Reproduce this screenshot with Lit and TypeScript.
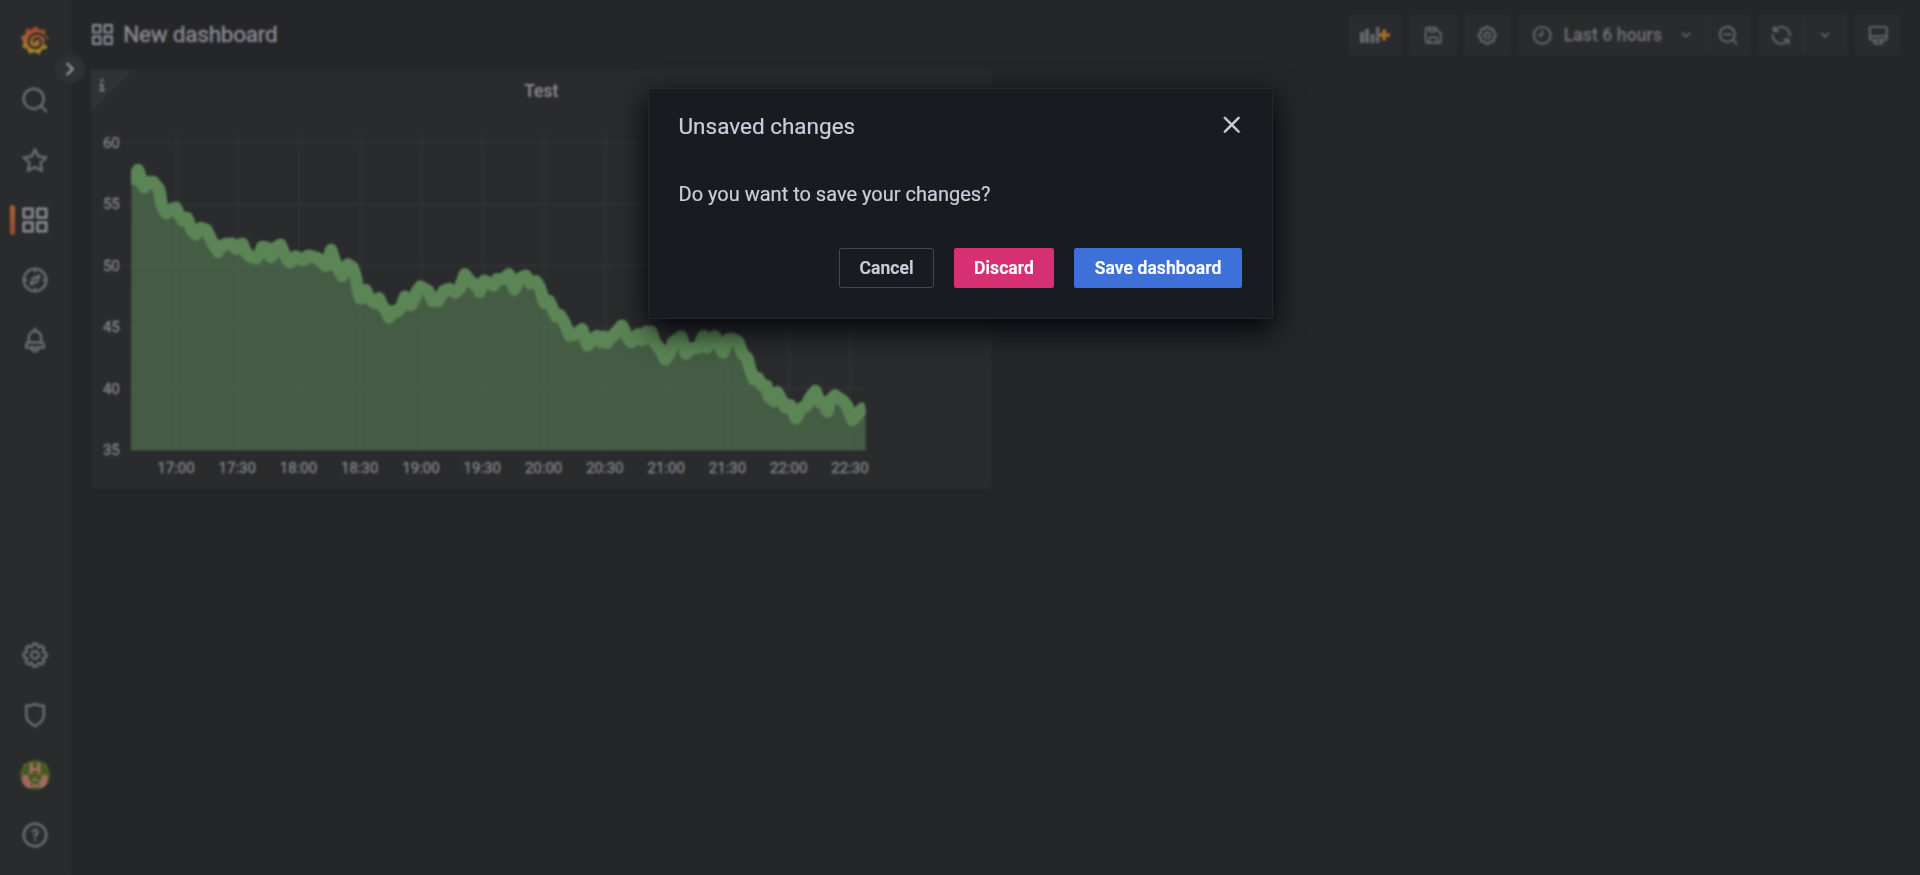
import { LitElement, html, css, svg } from "lit";
import { customElement } from "lit/decorators.js";

const ICONS: Record<string, string> = {
  search: "M21.71,20.29,18,16.61A9,9,0,1,0,16.61,18l3.68,3.68a1,1,0,0,0,1.42,0A1,1,0,0,0,21.71,20.29ZM11,18a7,7,0,1,1,7-7A7,7,0,0,1,11,18Z",
  star: "M22,9.67A1,1,0,0,0,21.14,9l-5.69-.83L12.9,3a1,1,0,0,0-1.8,0L8.55,8.16,2.86,9a1,1,0,0,0-.81.68,1,1,0,0,0,.25,1l4.13,4-1,5.68A1,1,0,0,0,6.9,21.44L12,18.77l5.1,2.67a.93.93,0,0,0,.46.12,1,1,0,0,0,.59-.19,1,1,0,0,0,.4-1l-1-5.68,4.13-4A1,1,0,0,0,22,9.67Zm-6.15,4a1,1,0,0,0-.29.88l.72,4.2-3.76-2a1.06,1.06,0,0,0-.94,0l-3.76,2,.72-4.2a1,1,0,0,0-.29-.88l-3-3,4.21-.61a1,1,0,0,0,.76-.55L12,5.7l1.88,3.82a1,1,0,0,0,.76.55l4.21.61Z",
  apps: "M10,13H3a1,1,0,0,0-1,1v7a1,1,0,0,0,1,1h7a1,1,0,0,0,1-1V14A1,1,0,0,0,10,13ZM9,20H4V15H9ZM21,2H14a1,1,0,0,0-1,1v7a1,1,0,0,0,1,1h7a1,1,0,0,0,1-1V3A1,1,0,0,0,21,2ZM20,9H15V4h5Zm1,4H14a1,1,0,0,0-1,1v7a1,1,0,0,0,1,1h7a1,1,0,0,0,1-1V14A1,1,0,0,0,21,13Zm-1,7H15V15h5ZM10,2H3A1,1,0,0,0,2,3v7a1,1,0,0,0,1,1h7a1,1,0,0,0,1-1V3A1,1,0,0,0,10,2ZM9,9H4V4H9Z",
  compass: "M12,2A10,10,0,1,0,22,12,10,10,0,0,0,12,2Zm1,17.93V19a1,1,0,0,0-2,0v.93A8,8,0,0,1,4.07,13H5a1,1,0,0,0,0-2H4.07A8,8,0,0,1,11,4.07V5a1,1,0,0,0,2,0V4.07A8,8,0,0,1,19.93,11H19a1,1,0,0,0,0,2h.93A8,8,0,0,1,13,19.93ZM15.14,7.55l-5,2.12a1,1,0,0,0-.52.52l-2.12,5a1,1,0,0,0,.21,1.1,1,1,0,0,0,.7.29.93.93,0,0,0,.4-.09l5-2.12a1,1,0,0,0,.52-.52l2.12-5a1,1,0,0,0-1.31-1.3Zm-2.49,5.1-2.28,1,1-2.28,2.28-1Z",
  bell: "M18,13.18V10a6,6,0,0,0-5-5.91V3a1,1,0,0,0-2,0V4.09A6,6,0,0,0,6,10v3.18A3,3,0,0,0,4,16v2a1,1,0,0,0,1,1H8.14a4,4,0,0,0,7.72,0H19a1,1,0,0,0,1-1V16A3,3,0,0,0,18,13.18ZM8,10a4,4,0,0,1,8,0v3H8Zm4,10a2,2,0,0,1-1.72-1h3.44A2,2,0,0,1,12,20Zm6-3H6V16a1,1,0,0,1,1-1H17a1,1,0,0,1,1,1Z",
  cog: "M21.32,9.55l-1.89-.63.89-1.78A1,1,0,0,0,20.13,6L18,3.87a1,1,0,0,0-1.15-.19l-1.78.89-.63-1.89A1,1,0,0,0,13.5,2h-3a1,1,0,0,0-.95.68L8.92,4.57,7.14,3.68A1,1,0,0,0,6,3.87L3.87,6a1,1,0,0,0-.19,1.15l.89,1.78-1.89.63A1,1,0,0,0,2,10.5v3a1,1,0,0,0,.68.95l1.89.63-.89,1.78A1,1,0,0,0,3.87,18L6,20.13a1,1,0,0,0,1.15.19l1.78-.89.63,1.89a1,1,0,0,0,.95.68h3a1,1,0,0,0,.95-.68l.63-1.89,1.78.89A1,1,0,0,0,18,20.13L20.13,18a1,1,0,0,0,.19-1.15l-.89-1.78,1.89-.63A1,1,0,0,0,22,13.5v-3A1,1,0,0,0,21.32,9.55ZM20,12.78l-1.2.4A2,2,0,0,0,17.64,16l.57,1.14-1.1,1.1L16,17.64a2,2,0,0,0-2.79,1.16l-.4,1.2H11.22l-.4-1.2A2,2,0,0,0,8,17.64l-1.14.57-1.1-1.1L6.36,16A2,2,0,0,0,5.2,13.18L4,12.78V11.22l1.2-.4A2,2,0,0,0,6.36,8L5.79,6.89l1.1-1.1L8,6.36A2,2,0,0,0,10.82,5.2l.4-1.2h1.56l.4,1.2A2,2,0,0,0,16,6.36l1.14-.57,1.1,1.1L17.64,8a2,2,0,0,0,1.16,2.79l1.2.4ZM12,8a4,4,0,1,0,4,4A4,4,0,0,0,12,8Zm0,6a2,2,0,1,1,2-2A2,2,0,0,1,12,14Z",
  shield: "M19.63,3.65a1,1,0,0,0-.84-.2,8,8,0,0,1-6.22-1.27,1,1,0,0,0-1.14,0A8,8,0,0,1,5.21,3.45a1,1,0,0,0-.84.2A1,1,0,0,0,4,4.43v7.45a9,9,0,0,0,3.77,7.33l3.65,2.6a1,1,0,0,0,1.16,0l3.65-2.6A9,9,0,0,0,20,11.88V4.43A1,1,0,0,0,19.63,3.65ZM18,11.88a7,7,0,0,1-2.93,5.7L12,19.77,8.93,17.58A7,7,0,0,1,6,11.88V5.58a10,10,0,0,0,6-1.39,10,10,0,0,0,6,1.39Z",
  question: "M11.29,15.29a1.58,1.58,0,0,0-.12.15.76.76,0,0,0-.09.18.64.64,0,0,0-.06.18,1.36,1.36,0,0,0,0,.2.84.84,0,0,0,.08.38.9.9,0,0,0,.54.54.94.94,0,0,0,.76,0,.9.9,0,0,0,.54-.54A1,1,0,0,0,13,16a1,1,0,0,0-.29-.71A1,1,0,0,0,11.29,15.29ZM12,2A10,10,0,1,0,22,12,10,10,0,0,0,12,2Zm0,18a8,8,0,1,1,8-8A8,8,0,0,1,12,20ZM12,7A3,3,0,0,0,9.4,8.5a1,1,0,1,0,1.73,1A1,1,0,0,1,12,9a1,1,0,0,1,0,2,1,1,0,0,0-1,1v1a1,1,0,0,0,2,0v-.18A3,3,0,0,0,12,7Z",
  right: "M14.83,11.29,10.59,7.05a1,1,0,0,0-1.42,0,1,1,0,0,0,0,1.41L12.71,12,9.17,15.54a1,1,0,0,0,0,1.41,1,1,0,0,0,.71.29,1,1,0,0,0,.71-.29l4.24-4.24A1,1,0,0,0,14.83,11.29Z",
  down: "M17,9.17a1,1,0,0,0-1.41,0L12,12.71,8.46,9.17a1,1,0,0,0-1.41,0,1,1,0,0,0,0,1.42l4.24,4.24a1,1,0,0,0,1.42,0L17,10.59A1,1,0,0,0,17,9.17Z",
  save: "M20.71,9.29l-6-6a1,1,0,0,0-.32-.21A1.09,1.09,0,0,0,14,3H6A3,3,0,0,0,3,6V18a3,3,0,0,0,3,3H18a3,3,0,0,0,3-3V10A1,1,0,0,0,20.71,9.29ZM9,5h4V7H9Zm6,14H9V16a1,1,0,0,1,1-1h4a1,1,0,0,1,1,1Zm4-1a1,1,0,0,1-1,1H17V16a3,3,0,0,0-3-3H10a3,3,0,0,0-3,3v3H6a1,1,0,0,1-1-1V6A1,1,0,0,1,6,5H7V8A1,1,0,0,0,8,9h6a1,1,0,0,0,1-1V6.41l4,4Z",
  clock: "M12,2A10,10,0,1,0,22,12,10,10,0,0,0,12,2Zm0,18a8,8,0,1,1,8-8A8,8,0,0,1,12,20ZM12,6a1,1,0,0,0-1,1v4H8a1,1,0,0,0,0,2h4a1,1,0,0,0,1-1V7A1,1,0,0,0,12,6Z",
  zoomOut: "M21.71,20.29,18,16.61A9,9,0,1,0,16.61,18l3.68,3.68a1,1,0,0,0,1.42,0A1,1,0,0,0,21.71,20.29ZM11,18a7,7,0,1,1,7-7A7,7,0,0,1,11,18Zm4-8H7a1,1,0,0,0,0,2h8a1,1,0,0,0,0-2Z",
  sync: "M19.91,15.51H15.38a1,1,0,0,0,0,2h2.4A8,8,0,0,1,4,12a1,1,0,0,0-2,0,10,10,0,0,0,16.88,7.23V21a1,1,0,0,0,2,0V16.5A1,1,0,0,0,19.91,15.51ZM12,2A10,10,0,0,0,5.12,4.77V3a1,1,0,0,0-2,0V7.5a1,1,0,0,0,1,1h4.5a1,1,0,0,0,0-2H6.22A8,8,0,0,1,20,12a1,1,0,0,0,2,0A10,10,0,0,0,12,2Z",
  monitor: "M19,2H5A3,3,0,0,0,2,5V15a3,3,0,0,0,3,3H7.64l-.58,1a2,2,0,0,0,0,2,2,2,0,0,0,1.75,1h6.46A2,2,0,0,0,17,21a2,2,0,0,0,0-2l-.59-1H19a3,3,0,0,0,3-3V5A3,3,0,0,0,19,2ZM8.77,20,10,18H14l1.2,2ZM20,15a1,1,0,0,1-1,1H5a1,1,0,0,1-1-1V14H20Zm0-3H4V5A1,1,0,0,1,5,4H19a1,1,0,0,1,1,1Z",
  times: "M13.41,12l6.3-6.29a1,1,0,1,0-1.42-1.42L12,10.59,5.71,4.29A1,1,0,0,0,4.29,5.71L10.59,12l-6.3,6.29a1,1,0,0,0,0,1.42,1,1,0,0,0,1.42,0L12,13.41l6.29,6.3a1,1,0,0,0,1.42,0,1,1,0,0,0,0-1.42Z",
};

const icon = (name: string, size = "s20") =>
  html`<svg class="icon ${size}" viewBox="0 0 24 24"><path d=${ICONS[name]} /></svg>`;

/* Series vertices in page pixels. */
const SERIES: number[][] = [
  ...[
    [155, 372], [175, 330], [193, 382], [205, 367], [220, 366], [238, 387], [246, 435], [260, 460], [270, 450],
    [288, 443], [298, 464], [308, 480], [322, 474], [335, 508], [348, 523], [363, 504], [380, 510], [390, 530],
    [402, 555], [415, 575], [425, 557], [440, 552], [457, 551], [470, 566], [488, 551], [497, 575], [512, 590],
    [530, 594], [542, 578], [547, 561], [560, 563], [574, 591], [585, 565], [602, 554], [612, 578], [622, 598],
    [632, 607], [648, 590], [670, 600], [685, 587], [712, 594], [725, 604], [738, 618], [754, 570], [770, 618],
    [787, 648], [795, 622], [805, 614], [818, 622], [828, 650], [835, 690], [842, 715], [858, 690], [868, 715],
    [885, 729], [898, 715], [908, 738], [918, 750], [928, 772], [940, 754], [952, 755], [965, 740], [976, 710],
    [994, 735], [1005, 715], [1011, 695], [1022, 680], [1045, 692], [1058, 722], [1075, 722], [1092, 693],
    [1110, 687], [1125, 697], [1140, 685], [1155, 643], [1172, 665], [1190, 675],
  ].map(([x, y]) => [80 + x / 3, 60 + y / 3]),
  ...[
    [0, 155], [13, 122], [42, 136], [52, 118], [70, 118], [87, 103], [104, 148], [118, 116], [138, 107],
    [152, 130], [168, 124], [180, 142], [194, 188], [208, 183], [228, 228], [240, 225], [255, 250], [270, 287],
    [290, 282], [307, 268], [323, 316], [337, 300], [352, 288], [365, 306], [372, 290], [382, 308], [395, 290],
    [405, 282], [427, 257], [440, 285], [455, 306], [475, 283], [487, 300], [500, 275], [515, 276], [525, 308],
    [540, 325], [557, 358], [572, 335], [580, 307], [605, 289], [618, 340], [632, 326], [657, 322], [671, 287],
    [682, 322], [705, 288], [730, 337], [745, 298], [757, 296], [775, 305], [788, 340], [803, 355], [812, 390],
    [822, 418], [835, 415], [847, 436], [860, 438], [868, 470], [882, 483], [893, 457], [905, 480], [917, 502],
    [932, 496], [948, 535], [965, 505], [980, 497], [990, 475], [1007, 453], [1020, 487], [1030, 487], [1043, 514],
    [1052, 480], [1066, 467], [1090, 483], [1103, 500], [1118, 540], [1134, 522], [1145, 508], [1158, 503],
  ].map(([x, y]) => [480 + x / 3, 240 + y / 3]),
];

const LEFT = 91.25;
const TOP = 70;
const POINTS = SERIES.map(([x, y]) => `${(x - LEFT).toFixed(2)},${(y - TOP).toFixed(2)}`).join(" ");
const Y_TICKS = [60, 55, 50, 45, 40, 35];
const X_TICKS = ["17:00", "17:30", "18:00", "18:30", "19:00", "19:30", "20:00", "20:30", "21:00", "21:30", "22:00", "22:30"];

@customElement("time-series-chart")
class TimeSeriesChart extends LitElement {
  static styles = css`
    :host { display: block; }
    .plot { display: block; width: 900px; height: 418px; }
    .grid { stroke: rgba(240, 250, 255, 0.065); stroke-width: 1.25; }
    .area { fill: #73bf69; fill-opacity: 0.55; }
    .line { fill: none; stroke: #73bf69; stroke-width: 12.5; stroke-linejoin: round; }
    .tick { font: 15px Roboto, sans-serif; fill: rgb(190, 190, 204); stroke: rgb(190, 190, 204); stroke-width: 0.3; }
    .end { text-anchor: end; }
    .mid { text-anchor: middle; }
  `;

  render() {
    return html`<svg class="plot" viewBox="0 0 900 418">
      <defs><clipPath id="bounds"><rect x="40" y="50" width="734.8" height="330.500" /></clipPath></defs>
      ${Y_TICKS.map((v, i) => {
        const y = 72.8 + i * 61.46;
        return svg`<line class="grid" x1="35" x2="774.5" y1=${y} y2=${y} />
          <text class="tick end" x="28.8" y=${y + 5}>${v}</text>`;
      })}
      ${X_TICKS.map((t, i) => {
        const x = 85.4 + i * 61.28;
        return svg`<line class="grid" x1=${x} x2=${x} y1="62" y2="385" />
          <text class="tick mid" x=${x - 0.5} y="402.5">${t}</text>`;
      })}
      <g clip-path="url(#bounds)">
        <polygon class="area" points="40,380.5 ${POINTS} 774.8,380.5" />
        <polyline class="line" points=${POINTS} />
      </g>
    </svg>`;
  }
}

@customElement("app-root")
class AppRoot extends LitElement {
  static styles = css`
    :host { display: block; font-family: Roboto, "Liberation Sans", sans-serif; font-size: 17.5px; color: rgb(204, 204, 220); }
    * { box-sizing: border-box; }
    .icon { fill: currentColor; display: block; flex: none; }
    .s20 { width: 20px; height: 20px; }
    .s22 { width: 22.5px; height: 22.5px; }
    .s25 { width: 25px; height: 25px; }
    .s30 { width: 30px; height: 30px; }
    .app { display: flex; height: 875px; background: #12131a; overflow: hidden; }
    .side { position: relative; width: 71.25px; flex: none; background: #1a1d1f; border-right: 1px solid rgba(204, 204, 220, 0.03); display: flex; flex-direction: column; align-items: center; color: rgba(204, 204, 220, 0.65); padding: 10px 0; }
    .item { position: relative; width: 100%; height: 60px; display: flex; align-items: center; justify-content: center; flex: none; }
    .active { color: rgb(204, 204, 220); }
    .active::before { content: ""; position: absolute; left: 10px; top: 15px; width: 5px; height: 30px; border-radius: 2.5px; background: linear-gradient(0deg, #f05a28 30%, #fbca0a 190%); }
    .spacer { flex: 1; }
    .toggle { position: absolute; left: 55px; top: 54px; width: 30px; height: 30px; border-radius: 50%; background: #22252b; display: flex; align-items: center; justify-content: center; color: rgb(204, 204, 220); z-index: 2; }
    .main { flex: 1; min-width: 0; display: flex; flex-direction: column; padding: 0 19.5px; }
    .bar { height: 70px; display: flex; align-items: center; }
    .title { display: flex; align-items: center; gap: 8px; font-size: 22.5px; letter-spacing: -0.23px; flex: 1; padding-bottom: 1px; -webkit-text-stroke: 0.3px; }
    .title .icon { margin-left: -0.5px; }
    .title span { padding-bottom: 1.5px; }
    .tools { display: flex; gap: 8.95px; }
    .btn { height: 40px; display: flex; align-items: center; justify-content: center; background: #1a1d1f; border: 1px solid rgba(204, 204, 220, 0.02); border-radius: 2.5px; color: rgba(204, 204, 220, 0.62); font-weight: 500; }
    .group { display: flex; }
    .w52 { width: 52.5px; }
    .w46 { width: 46px; }
    .w45 { width: 45px; }
    .w43 { width: 43px; }
    .time { width: 187.5px; padding: 0 10px 0 11px; justify-content: flex-start; }
    .time .label { margin: 0 auto 0 10px; white-space: nowrap; letter-spacing: 0.12px; -webkit-text-stroke: 0.3px; }
    .panel { position: relative; width: 900px; height: 418px; background: #1a1d1f; border-radius: 2.5px; margin-left: 0.5px; }
    .panel-title { position: absolute; inset: 1px 0 auto; height: 40px; display: flex; align-items: center; justify-content: center; font-weight: 500; }
    .corner { position: absolute; left: 0; top: 0; width: 41px; height: 41px; background: linear-gradient(135deg, #232b30 50%, transparent 50.5%); }
    .info { position: absolute; left: 7px; top: 9px; width: 8px; height: 13px; fill: rgba(204, 204, 220, 0.65); }
    .backdrop { position: fixed; inset: 0; z-index: 5; background: rgba(63, 62, 62, 0.45); backdrop-filter: blur(1.25px); }
    .modal { position: absolute; z-index: 6; left: 648px; top: 88px; width: 625px; height: 231px; background: #181b1f; border: 1px solid rgba(204, 204, 220, 0.07); border-radius: 2.5px; box-shadow: 0 10px 30px #010409; padding: 0 30px 0 29.5px; display: flex; flex-direction: column; }
    .modal-head { height: 74px; display: flex; align-items: center; justify-content: space-between; font-size: 22.5px; -webkit-text-stroke: 0.2px; }
    .modal-head .icon { width: 23.5px; height: 23.5px; margin: 0 -1.5px 2px 0; stroke: currentColor; stroke-width: 0.7; }
    .modal-body { height: 85px; padding-top: 18px; font-size: 20px; line-height: 27px; -webkit-text-stroke: 0.2px; }
    .actions { display: flex; justify-content: flex-end; gap: 20px; }
    .action { height: 40px; border-radius: 2.5px; display: flex; align-items: center; justify-content: center; font-weight: 600; letter-spacing: 0.08px; color: #fff; -webkit-text-stroke: 0.2px; }
    .cancel { width: 95px; color: rgb(204, 204, 220); border: 1px solid rgba(204, 204, 220, 0.25); }
    .discard { width: 100px; background: #d63072; }
    .save { width: 168px; background: #3d71d9; }
  `;

  private logo() {
    const teeth = 9;
    const pts: string[] = [];
    for (let i = 0; i < teeth * 2; i++) {
      const a = (i * Math.PI) / teeth - Math.PI / 2 + 0.05;
      const r = i % 2 ? 11.6 : 14.6;
      pts.push(`${(15 + r * Math.cos(a)).toFixed(2)},${(15.5 + r * Math.sin(a)).toFixed(2)}`);
    }
    return html`<svg class="s30" viewBox="0 0 30 30">
      <defs>
        <linearGradient id="flame" x1="0" y1="1" x2="0" y2="0">
          <stop offset="0.05" stop-color="#f5c20c" /><stop offset="0.9" stop-color="#f05228" />
        </linearGradient>
        <mask id="swirl">
          <rect width="30" height="30" fill="#fff" />
          <path d="M27 17.500C25.500 11.500 21.500 8.700 17 8.700C12.200 8.700 8.700 12.200 8.700 16.500C8.700 20.500 11.800 23 15.200 23C18.800 23 21.200 20.500 21.200 17.600C21.200 15 19.300 13.400 17.200 13.400C15.200 13.400 14 14.800 14 16.300" fill="none" stroke="#000" stroke-width="2.300" stroke-linecap="round" />
          <path d="M24 15.500L30 13V20H24Z" fill="#000" />
        </mask>
      </defs>
      <polygon points=${pts.join(" ")} fill="url(#flame)" mask="url(#swirl)" />
    </svg>`;
  }

  private avatar() {
    return html`<svg class="s30" viewBox="0 0 30 30">
      <defs><clipPath id="round"><circle cx="15" cy="15" r="15" /></clipPath></defs>
      <g clip-path="url(#round)">
        <rect width="30" height="30" fill="#4c7208" />
        <path fill="#f08c80" d="M9.500 3h3.500v5h4V3h3.500v11h-3V11h-5v3h-3ZM3 3.500h3.500L3 7ZM27 3.500h-3.500L27 7ZM2.500 15h6v4l3.500 3.500-2 2.500 2 3H6l-3.500-5ZM27.500 15h-6v4L18 22.500l2 2.500-2 3h6l3.500-5ZM12 18.500h6l-1.500 2.500h-3ZM12.500 24h5l1.500 3h-8Z" />
      </g>
    </svg>`;
  }

  private addPanel() {
    return html`<svg class="icon" width="31" height="20" viewBox="0 0 31 20">
      <path d="M0 7h4v11H0ZM5 4h4v14H5ZM10.500 9h4v9h-4ZM16 2h3.500v16H16Z" />
      <path d="M24.200 4.500V15.500M18.700 10H30" stroke="#181b1f" stroke-width="5.500" />
      <path d="M24.200 4.500V15.500M18.700 10H30" stroke="#f7941e" stroke-width="3.500" />
    </svg>`;
  }

  render() {
    return html`
      <div class="app">
        <nav class="side">
          <div class="item">${this.logo()}</div>
          ${["search", "star", "apps", "compass", "bell"].map(
            (n) => html`<div class="item ${n === "apps" ? "active" : ""}">${icon(n, "s30")}</div>`
          )}
          <div class="spacer"></div>
          ${["cog", "shield"].map((n) => html`<div class="item">${icon(n, "s30")}</div>`)}
          <div class="item">${this.avatar()}</div>
          <div class="item">${icon("question", "s30")}</div>
          <div class="toggle">${icon("right", "s30")}</div>
        </nav>
        <main class="main">
          <header class="bar">
            <div class="title">${icon("apps", "s25")}<span>New dashboard</span></div>
            <div class="tools">
              <div class="btn w52">${this.addPanel()}</div>
              <div class="btn w46">${icon("save", "s22")}</div>
              <div class="btn w45">${icon("cog", "s22")}</div>
              <div class="group">
                <div class="btn time">${icon("clock", "s22")}<span class="label">Last 6 hours</span>${icon("down", "s20")}</div>
                <div class="btn w43">${icon("zoomOut", "s22")}</div>
              </div>
              <div class="group">
                <div class="btn w45">${icon("sync", "s22")}</div>
                <div class="btn w43">${icon("down", "s20")}</div>
              </div>
              <div class="btn w45">${icon("monitor", "s22")}</div>
            </div>
          </header>
          <section class="panel">
            <time-series-chart></time-series-chart>
            <div class="corner"><svg class="info" viewBox="0 0 8 13"><path d="M2.500 0h3v2.700h-3ZM1 4.500h4.700v6h1.300v2H1v-2h1.500v-4H1Z" /></svg></div>
            <div class="panel-title">Test</div>
          </section>
        </main>
      </div>
      <div class="backdrop"></div>
      <div class="modal" role="dialog">
        <div class="modal-head"><span>Unsaved changes</span>${icon("times", "s25")}</div>
        <div class="modal-body">Do you want to save your changes?</div>
        <div class="actions">
          <div class="action cancel">Cancel</div>
          <div class="action discard">Discard</div>
          <div class="action save">Save dashboard</div>
        </div>
      </div>
    `;
  }
}
